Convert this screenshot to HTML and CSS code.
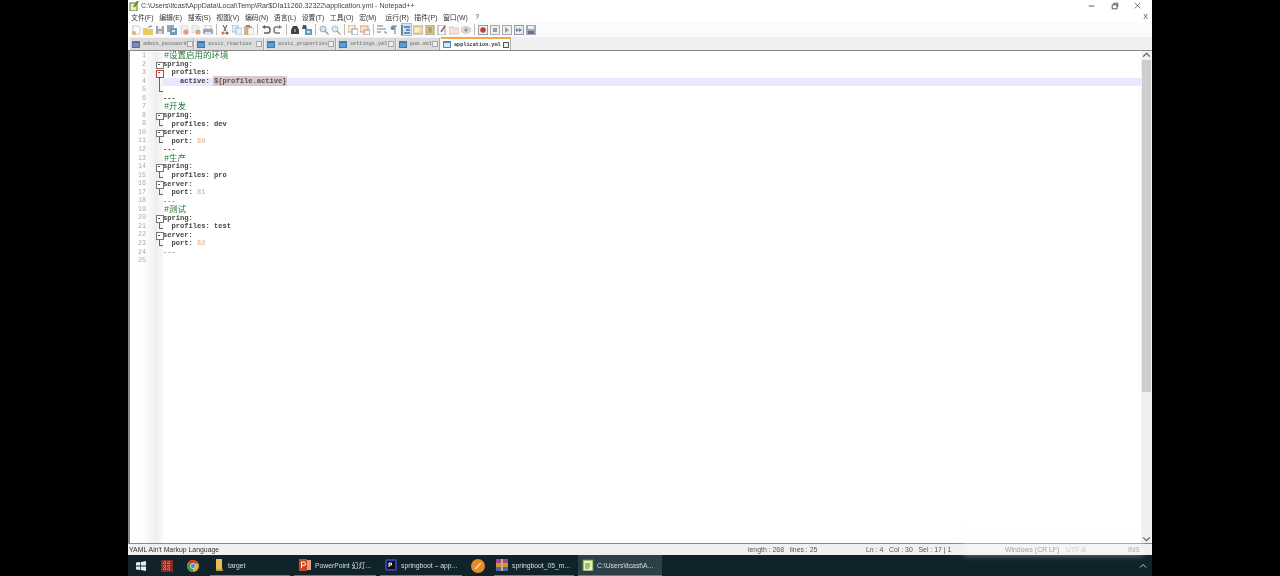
FILE: index.html
```html
<!DOCTYPE html>
<html lang="en">
<head>
  <meta charset="utf-8">
  <title>application.yml - Notepad++</title>
  <link rel="stylesheet" href="styles.css">
</head>
<body>
<div class="window">

  <!-- title bar -->
  <div class="titlebar">
    <svg class="app-icon" viewBox="0 0 10 10"><rect x="1" y="2" width="7" height="8" fill="#e8f0c8" stroke="#5c7a30"/><path d="M5 6 L9 0" stroke="#6a8a20" stroke-width="2"/></svg>
    <span class="title-text">C:\Users\itcast\AppData\Local\Temp\Rar$DIa11260.32322\application.yml - Notepad++</span>
    <div class="win-btns">
      <svg viewBox="0 0 10 10"><path d="M1 5H8" stroke="#333"/></svg>
      <svg viewBox="0 0 10 10"><path d="M1.5 3.5H7.5V8.5H1.5ZM3.5 3V1.5H8.5V6" fill="none" stroke="#333"/></svg>
      <svg viewBox="0 0 10 10"><path d="M1 1L8 8M8 1L1 8" stroke="#333" stroke-width=".8"/></svg>
    </div>
  </div>

  <!-- menu -->
  <div class="menubar">
    <span>文件(F)</span><span>编辑(E)</span><span>搜索(S)</span><span>视图(V)</span><span>编码(N)</span><span>语言(L)</span><span>设置(T)</span><span>工具(O)</span><span class="short">宏(M)</span><span>运行(R)</span><span>插件(P)</span><span>窗口(W)</span><span class="help">?</span>
    <b class="menu-x">X</b>
  </div>

  <!-- toolbar -->
  <div class="toolbar">
    <svg viewBox="0 0 10 10"><path d="M2 1H7L9 3V9H2Z" fill="#fff" stroke="#999" stroke-width=".6"/><circle cx="3" cy="8" r="2" fill="#e8a040"/></svg>
    <svg viewBox="0 0 10 10"><path d="M0 3H4L5 4H10V10H0Z" fill="#eac050"/><path d="M4 3L8 0L9 2Z" fill="#5a8ac0"/></svg>
    <svg viewBox="0 0 10 10"><rect x="1" y="1" width="8" height="8" fill="#8a97a6"/><rect x="3" y="1" width="4" height="3" fill="#eee"/><rect x="3" y="6" width="4" height="3" fill="#ccd"/></svg>
    <svg viewBox="0 0 10 10"><rect x="0" y="0" width="7" height="7" fill="#7f9cb0"/><rect x="3" y="3" width="7" height="7" fill="#5c8aa5"/><rect x="5" y="5" width="3" height="2" fill="#dde"/></svg>
    <svg viewBox="0 0 10 10"><path d="M2 0H7L9 2V9H2Z" fill="#eee" stroke="#bbb" stroke-width=".5"/><circle cx="7" cy="7" r="2.6" fill="#e08a70"/></svg>
    <svg viewBox="0 0 10 10"><path d="M1 0H6L8 2V8H1Z" fill="#eee" stroke="#bbb" stroke-width=".5"/><circle cx="7" cy="7" r="2.6" fill="#d89a60"/></svg>
    <svg viewBox="0 0 10 10"><rect x="2" y="0" width="6" height="4" fill="#fff" stroke="#889" stroke-width=".6"/><rect x="0" y="4" width="10" height="5" fill="#8a9aae"/><rect x="2" y="7" width="6" height="3" fill="#dde"/></svg>
    <i class="sep"></i>
    <svg viewBox="0 0 10 10"><path d="M7 0L4 6M3 0L6 6" stroke="#555" stroke-width="1.1"/><circle cx="3" cy="8" r="1.6" fill="#c86030"/><circle cx="7" cy="8" r="1.6" fill="#555"/></svg>
    <svg viewBox="0 0 10 10"><rect x="0" y="0" width="6" height="7" fill="#d8e6f4" stroke="#7a9cc0" stroke-width=".7"/><rect x="4" y="3" width="6" height="7" fill="#e6f0fa" stroke="#7a9cc0" stroke-width=".7"/></svg>
    <svg viewBox="0 0 10 10"><rect x="0" y="1" width="8" height="9" fill="#c8a868"/><rect x="2" y="0" width="4" height="2" fill="#777"/><rect x="4" y="3" width="6" height="7" fill="#f4f4f4" stroke="#999" stroke-width=".5"/></svg>
    <i class="sep"></i>
    <svg viewBox="0 0 10 10"><path d="M3 2H7Q9 2 9 5T7 8H3" fill="none" stroke="#444" stroke-width="1.5"/><path d="M4 0L1 2L4 4Z" fill="#444"/></svg>
    <svg viewBox="0 0 10 10"><path d="M7 2H3Q1 2 1 5T3 8H7" fill="none" stroke="#666" stroke-width="1.5"/><path d="M6 0L9 2L6 4Z" fill="#666"/></svg>
    <i class="sep"></i>
    <svg viewBox="0 0 10 10"><path d="M3 1H7L9 5V9H1V5Z" fill="#222"/><rect x="4" y="4" width="2" height="3" fill="#777"/></svg>
    <svg viewBox="0 0 10 10"><path d="M1 0H4L5 4H0Z" fill="#334"/><rect x="3" y="4" width="7" height="6" fill="#4a90b8"/><rect x="5" y="6" width="3" height="2" fill="#bde"/></svg>
    <i class="sep"></i>
    <svg viewBox="0 0 10 10"><circle cx="4" cy="4" r="3" fill="#cfe0e8" stroke="#789" stroke-width=".8"/><path d="M6 6L9.5 9.5" stroke="#b08050" stroke-width="1.4"/></svg>
    <svg viewBox="0 0 10 10"><circle cx="4" cy="4" r="3" fill="#dfe4e8" stroke="#99a" stroke-width=".8"/><path d="M6 6L9.5 9.5" stroke="#c09070" stroke-width="1.4"/></svg>
    <i class="sep"></i>
    <svg viewBox="0 0 10 10"><rect x="0" y="0" width="7" height="7" fill="#f8ecd0" stroke="#c8a050"/><rect x="4" y="4" width="6" height="6" fill="#fff" stroke="#88a"/></svg>
    <svg viewBox="0 0 10 10"><rect x="0" y="1" width="8" height="6" fill="#f4e4c0" stroke="#c89860"/><rect x="4" y="5" width="6" height="5" fill="#eef" stroke="#c08070"/></svg>
    <i class="sep"></i>
    <svg viewBox="0 0 10 10"><path d="M0 1H6M0 4H9M0 7H4" stroke="#667" stroke-width="1.1"/><path d="M7 7H9V9" stroke="#48a" fill="none"/></svg>
    <svg viewBox="0 0 10 10"><path d="M3 1H8M6 1V9M4.5 1V5" stroke="#5a7a90" stroke-width="1.2"/><circle cx="3.5" cy="3" r="2" fill="#5a7a90"/></svg>
    <span class="tool-on"><svg viewBox="0 0 10 10"><path d="M1 0V10" stroke="#235" stroke-width="1.2"/><path d="M3 2H9M5 5H9M3 8H9" stroke="#2a60a0" stroke-width="1.3"/></svg></span>
    <svg viewBox="0 0 10 10"><rect x="0" y="1" width="10" height="8" fill="#f0d890" stroke="#998"/><rect x="2" y="3" width="4" height="4" fill="#fff0c0"/></svg>
    <svg viewBox="0 0 10 10"><rect x="1" y="0" width="8" height="10" fill="#d8c070" stroke="#887"/><path d="M3 3H7M3 5H7M3 7H7" stroke="#765"/></svg>
    <svg viewBox="0 0 10 10"><rect x="1" y="0" width="7" height="10" fill="#fff" stroke="#888"/><path d="M8 1L4 7" stroke="#a04030" stroke-width="1.5"/></svg>
    <svg viewBox="0 0 10 10"><path d="M0 2H4L5 3H10V9H0Z" fill="#f4dcd8" stroke="#c8a0a0" stroke-width=".6"/></svg>
    <svg viewBox="0 0 10 10"><ellipse cx="5" cy="5" rx="5" ry="3.4" fill="#d8d8d8" stroke="#999" stroke-width=".5"/><circle cx="5" cy="5" r="1.7" fill="#789"/></svg>
    <i class="sep"></i>
    <svg viewBox="0 0 10 10"><rect x=".5" y=".5" width="9" height="9" fill="#eee" stroke="#889"/><circle cx="5" cy="5" r="2.8" fill="#b02020"/></svg>
    <svg viewBox="0 0 10 10"><rect x=".5" y=".5" width="9" height="9" fill="#eee" stroke="#99a"/><rect x="3" y="3" width="4" height="4" fill="#8a8f98"/></svg>
    <svg viewBox="0 0 10 10"><rect x=".5" y=".5" width="9" height="9" fill="#eee" stroke="#99a"/><path d="M3 2L7 5L3 8Z" fill="#8a8f98"/></svg>
    <svg viewBox="0 0 10 10"><rect x=".5" y=".5" width="9" height="9" fill="#e4e8ee" stroke="#889"/><path d="M2 3L5 5L2 7ZM5 3L8 5L5 7Z" fill="#4a6a90"/></svg>
    <svg viewBox="0 0 10 10"><rect x="0" y="0" width="10" height="10" fill="#8aa0b4"/><rect x="2" y="1" width="6" height="3" fill="#eee"/><rect x="2" y="6" width="6" height="3" fill="#556"/></svg>
  </div>

  <!-- tabs -->
  <div class="tabbar">
    <div class="tab tab-1"><i class="doc"></i><span>admin_password</span><i class="x"></i></div>
    <div class="tab tab-2"><i class="doc"></i><span>assic_reaction</span><i class="x"></i></div>
    <div class="tab tab-3"><i class="doc"></i><span>assic_properties</span><i class="x"></i></div>
    <div class="tab tab-4"><i class="doc"></i><span>settings.yml</span><i class="x"></i></div>
    <div class="tab tab-5"><i class="doc"></i><span>pom.xml</span><i class="x"></i></div>
    <div class="tab active"><i class="doc"></i><span>application.yml</span><i class="x"></i></div>
  </div>

  <!-- editor -->
  <div class="editor">
    <div class="code">
      <div class="row"><i class="no">1</i><i class="fold"></i><span class="txt c">#设置启用的环境</span></div>
      <div class="row"><i class="no">2</i><i class="fold box"></i><span class="txt">spring:</span></div>
      <div class="row"><i class="no">3</i><i class="fold box red"></i><span class="txt">  profiles:</span></div>
      <div class="row cur"><i class="no">4</i><i class="fold line red"></i><span class="txt">    active: <em>${profile.active}</em></span></div>
      <div class="row"><i class="no">5</i><i class="fold end"></i><span class="txt"></span></div>
      <div class="row"><i class="no">6</i><i class="fold"></i><span class="txt">---</span></div>
      <div class="row"><i class="no">7</i><i class="fold"></i><span class="txt c">#开发</span></div>
      <div class="row"><i class="no">8</i><i class="fold box"></i><span class="txt">spring:</span></div>
      <div class="row"><i class="no">9</i><i class="fold end"></i><span class="txt">  profiles: dev</span></div>
      <div class="row"><i class="no">10</i><i class="fold box"></i><span class="txt">server:</span></div>
      <div class="row"><i class="no">11</i><i class="fold end"></i><span class="txt">  port: <u>80</u></span></div>
      <div class="row"><i class="no">12</i><i class="fold"></i><span class="txt">---</span></div>
      <div class="row"><i class="no">13</i><i class="fold"></i><span class="txt c">#生产</span></div>
      <div class="row"><i class="no">14</i><i class="fold box"></i><span class="txt">spring:</span></div>
      <div class="row"><i class="no">15</i><i class="fold end"></i><span class="txt">  profiles: pro</span></div>
      <div class="row"><i class="no">16</i><i class="fold box"></i><span class="txt">server:</span></div>
      <div class="row"><i class="no">17</i><i class="fold end"></i><span class="txt">  port: <u>81</u></span></div>
      <div class="row"><i class="no">18</i><i class="fold"></i><span class="txt dim">---</span></div>
      <div class="row"><i class="no">19</i><i class="fold"></i><span class="txt c">#测试</span></div>
      <div class="row"><i class="no">20</i><i class="fold box"></i><span class="txt">spring:</span></div>
      <div class="row"><i class="no">21</i><i class="fold end"></i><span class="txt">  profiles: test</span></div>
      <div class="row"><i class="no">22</i><i class="fold box"></i><span class="txt">server:</span></div>
      <div class="row"><i class="no">23</i><i class="fold end"></i><span class="txt">  port: <u>82</u></span></div>
      <div class="row"><i class="no">24</i><i class="fold"></i><span class="txt dim">---</span></div>
      <div class="row"><i class="no">25</i><i class="fold"></i><span class="txt"></span></div>
      <div class="gutter-rest"><i class="no"></i><i class="fold"></i></div>
    </div>
    <div class="scroll">
      <svg class="arrow" viewBox="0 0 8 8"><path d="M1 5L4 2L7 5" fill="none" stroke="#555"/></svg>
      <div class="thumb"></div>
      <div class="track"></div>
      <svg class="arrow" viewBox="0 0 8 8"><path d="M1 3L4 6L7 3" fill="none" stroke="#555"/></svg>
    </div>
  </div>

  <!-- status bar -->
  <div class="status">
    <span class="st-lang">YAML Ain't Markup Language</span>
    <span class="st-len">length : 268 &nbsp; lines : 25</span>
    <span class="st-pos">Ln : 4 &nbsp; Col : 30 &nbsp; Sel : 17 | 1</span>
    <span class="st-eol">Windows (CR LF)</span>
    <span class="st-enc">UTF-8</span>
    <span class="st-ins">INS</span>
  </div>

  <!-- taskbar -->
  <div class="taskbar">
    <svg class="start" viewBox="0 0 10 10"><path d="M0 1.5L4.3 1V4.6H0ZM5 .9L10 0V4.6H5ZM0 5.4H4.3V9L0 8.5ZM5 5.4H10V10L5 9.1Z" fill="#e8eef0"/></svg>
    <span class="task-icon">
      <svg viewBox="0 0 12 12"><rect width="12" height="12" rx="1" fill="#8c2a26"/><path d="M2 3H10M2 6H10M2 9H10M4 1V11M8 1V11" stroke="#d8a8a0" stroke-dasharray="1 1"/></svg>
    </span>
    <span class="task-icon">
      <svg viewBox="0 0 12 12"><circle cx="6" cy="6" r="6" fill="#d8b030"/><path d="M6 6L1 2.5A6 6 0 0 1 11.5 3.5H6Z" fill="#cc4030"/><path d="M6 6L.8 3A6 6 0 0 0 6 12Z" fill="#3f9a4a"/><circle cx="6" cy="6" r="2.6" fill="#4a88d8" stroke="#eee" stroke-width=".7"/></svg>
    </span>
    <div class="task t-target">
      <svg viewBox="0 0 12 12"><path d="M3 0H9V12H3Z" fill="#e8c050"/><path d="M3 10H10V12H3Z" fill="#c89830"/></svg>
      <span>target</span>
    </div>
    <div class="task t-ppt">
      <svg viewBox="0 0 12 12"><rect x="3" y="1" width="9" height="10" fill="#e8a080"/><rect y="0" width="8" height="12" fill="#c84a28"/><path d="M2.5 9V3H5Q6.5 3 6.5 4.7T5 6.4H2.5" fill="none" stroke="#fff"/></svg>
      <span>PowerPoint 幻灯...</span>
    </div>
    <div class="task t-idea">
      <svg viewBox="0 0 12 12"><rect width="12" height="12" rx="2" fill="#3040a0"/><rect x="2" y="2" width="8" height="8" fill="#111"/><path d="M4 8V4H6.5V6H4" fill="none" stroke="#fff"/></svg>
      <span>springboot – app...</span>
    </div>
    <span class="task-icon orange">
      <svg viewBox="0 0 12 12"><circle cx="6" cy="6" r="6" fill="#e88a28"/><path d="M3.5 8.5L8.5 3.5" stroke="#f8e0b0" stroke-width="1.2"/></svg>
    </span>
    <div class="task t-rar">
      <svg viewBox="0 0 12 12"><rect width="12" height="4" fill="#a04890"/><rect y="4" width="12" height="4" fill="#d89030"/><rect y="8" width="12" height="4" fill="#4070a8"/><rect x="5" width="2" height="12" fill="#c8b070"/></svg>
      <span>springboot_05_m...</span>
    </div>
    <div class="task t-npp">
      <svg viewBox="0 0 12 12"><rect x="1" y="1" width="10" height="11" fill="#e8f0c0" stroke="#5a8a30"/><path d="M3 5H8M3 7H8M3 9H7" stroke="#5a8a30"/></svg>
      <span>C:\Users\itcast\A...</span>
    </div>
    <svg class="tray" viewBox="0 0 8 8"><path d="M1 5.5L4 2.5L7 5.5" fill="none" stroke="#b8c4c8"/></svg>
  </div>

  <div class="watermark"></div>
</div>
</body>
</html>
```

FILE: styles.css
```css
* {
    margin: 0;
    padding: 0;
    box-sizing: border-box;
}
html, body {
    height: 100%;
    background: #000;
    overflow: hidden;
}
i, em, u {
    font-style: normal;
    text-decoration: none;
}

.window {
    position: relative;
    width: 1024px;
    height: 576px;
    margin: 0 auto;
    background: #fff;
    display: flex;
    flex-direction: column;
    font-family: "Liberation Sans", "Noto Sans CJK SC", sans-serif;
    font-size: 7px;
    color: #333;
    filter: blur(.45px);
}

/* title bar */
.titlebar {
    height: 11px;
    display: flex;
    align-items: center;
    background: #fff;
}
.app-icon {
    width: 10px;
    height: 10px;
    margin: 0 2px 0 1px;
}
.title-text {
    font-size: 7.1px;
    color: #444;
}
.win-btns {
    margin-left: auto;
    display: flex;
    gap: 15px;
    margin-right: 10px;
}
.win-btns svg {
    width: 8px;
    height: 8px;
}

/* menu */
.menubar {
    height: 11px;
    display: flex;
    align-items: center;
    padding-left: 3px;
    gap: 5.6px;
    font-size: 6.9px;
    color: #333;
    background: #fff;
}
.menubar .short {
    margin-right: 3.4px;
}
.menubar .help {
    margin-left: 2px;
}
.menu-x {
    margin-left: auto;
    margin-right: 4px;
    font-weight: normal;
    font-size: 7px;
    color: #444;
}

/* toolbar */
.toolbar {
    height: 15px;
    display: flex;
    align-items: center;
    padding-left: 3px;
    gap: 2px;
    background: #fbfbfb;
}
.toolbar svg {
    width: 10px;
    height: 10px;
    flex: none;
    opacity: .85;
}
.sep {
    width: 1px;
    height: 11px;
    margin: 0 1px;
    background: #bbb;
}
.tool-on {
    width: 11px;
    height: 13px;
    margin: 0 -.5px;
    display: flex;
    align-items: center;
    justify-content: center;
    background: #cfe3f5;
    border: 1px solid #9cc0e0;
}

/* tabs */
.tabbar {
    height: 13px;
    display: flex;
    align-items: flex-end;
    padding-left: 2px;
    gap: 1px;
    background: #f0f0f0;
}
.tab {
    height: 12px;
    display: flex;
    align-items: center;
    padding: 0 1px 0 2px;
    background: #dcdcdc;
    border-right: 1px solid #aaa;
    font-family: "Liberation Mono", monospace;
    font-size: 5.2px;
    font-weight: bold;
    color: #888;
}
.tab-1 { width: 64px; }
.tab-2 { width: 69px; }
.tab-3 { width: 71px; }
.tab-4 { width: 59px; }
.tab-5 { width: 43px; }
.tab.active {
    width: 70px;
    height: 13px;
    background: #fff;
    color: #333;
    border-top: 2px solid #f0a848;
}
.tab span {
    flex: 1;
    padding-left: 3px;
    white-space: nowrap;
}
.doc {
    width: 8px;
    height: 7px;
    flex: none;
    background: #5f9cd0;
    border: 1px solid #3f7ab0;
    border-top-width: 2px;
}
.tab:first-child .doc {
    background: #8088b8;
    border-color: #6068a0;
}
.tab.active .doc {
    background: #d8e8f4;
    border-color: #4a88c0;
}
.x {
    width: 6px;
    height: 6px;
    flex: none;
    border: 1px solid #aaa;
    background: #eee;
}
.tab.active .x {
    border-color: #555;
}

/* editor */
.editor {
    flex: 1;
    min-height: 0;
    display: flex;
    border-top: 1px solid #8a8a8a;
    border-bottom: 1px solid #8a8a8a;
    border-left: 2px solid #8a8a8a;
}
.code {
    flex: 1;
    display: flex;
    flex-direction: column;
    margin-top: 1px;
}
.row {
    height: 8.55px;
    flex: none;
    display: flex;
    align-items: center;
}
.gutter-rest {
    flex: 1;
    display: flex;
}
.no {
    width: 25px;
    height: 100%;
    flex: none;
    padding-right: 9px;
    text-align: right;
    line-height: 8.55px;
    font-family: "Liberation Mono", monospace;
    font-size: 6.6px;
    color: #aaa;
    background: linear-gradient(to right, #fff 50%, #f1f1f1);
}
.fold {
    position: relative;
    width: 8px;
    height: 100%;
    flex: none;
    background: linear-gradient(to right, #ededed, #f8f8f8);
}
.fold.box::before {
    content: "";
    position: absolute;
    left: 1px;
    top: 1px;
    width: 5.5px;
    height: 5.5px;
    border: 1px solid #777;
    background: #fff;
}
.fold.box::after {
    content: "";
    position: absolute;
    left: 2.5px;
    top: 3.3px;
    width: 2.5px;
    height: 1px;
    background: #555;
}
.fold.box.red::before {
    border-color: #c04040;
}
.fold.box.red::after {
    background: #c04040;
}
.fold.line::before {
    content: "";
    position: absolute;
    left: 3.5px;
    top: 0;
    width: 1px;
    height: 100%;
    background: #c04040;
}
.fold.end::before {
    content: "";
    position: absolute;
    left: 3.5px;
    top: 0;
    width: 3px;
    height: 5px;
    border-left: 1px solid #666;
    border-bottom: 1px solid #666;
}
.txt {
    padding-bottom: 1.4px;
    white-space: pre;
    font-family: "Liberation Mono", "Noto Sans CJK SC", monospace;
    font-size: 7.1px;
    font-weight: bold;
    color: #444;
    line-height: 8.55px;
}
.txt.c {
    padding-left: 1px;
    padding-bottom: 0;
    font-size: 8.5px;
    font-weight: normal;
    color: #1f7a35;
}
.txt.dim {
    color: #999;
}
.txt em {
    background: #dcc8c8;
    color: #555;
    outline: 1px solid #dcc8c8;
}
.txt u {
    color: #e8c0a0;
}
.row.cur {
    background: #e8e8ff;
}
.row.cur .txt {
    flex: 1;
}

/* scrollbar */
.scroll {
    width: 11px;
    flex: none;
    display: flex;
    flex-direction: column;
    background: #f0f0f0;
    padding-left: 1px;
}
.arrow {
    width: 9px;
    height: 9px;
    flex: none;
}
.thumb {
    height: 332px;
    flex: none;
    margin: 0 1px 0 0;
    background: #cdcdcd;
}
.track {
    flex: 1;
}

/* status bar */
.status {
    height: 11px;
    display: flex;
    align-items: center;
    background: #f0f0f0;
    font-size: 6.9px;
    color: #555;
    white-space: nowrap;
}
.st-lang { width: 620px; padding-left: 1px; color: #333; }
.st-len { width: 118px; }
.st-pos { width: 139px; }
.st-eol { width: 61px; color: #666; }
.st-enc { width: 62px; color: #aaa; }
.st-ins { color: #777; }

/* taskbar */
.taskbar {
    height: 21px;
    display: flex;
    align-items: center;
    background: #10232b;
    color: #d8dfe2;
    font-size: 6.8px;
    white-space: nowrap;
}
.start {
    width: 10px;
    height: 10px;
    margin: 0 15px 0 8px;
    flex: none;
}
.task-icon {
    width: 12px;
    height: 12px;
    margin-right: 14px;
    flex: none;
}
.task-icon svg, .task svg {
    display: block;
    width: 12px;
    height: 12px;
    flex: none;
}
.task-icon + .task-icon {
    margin-right: 11px;
}
.task {
    height: 100%;
    display: flex;
    align-items: center;
    gap: 4px;
    padding-left: 5px;
    border-bottom: 1px solid #5d8494;
}
.t-target { width: 80px; margin-right: 4px; padding-left: 3px; gap: 3px; }
.t-ppt { width: 82px; margin-right: 4px; }
.t-idea { width: 82px; margin-right: 9px; }
.task-icon.orange { width: 14px; height: 14px; margin: 0 9px 0 0; }
.task-icon.orange svg { width: 14px; height: 14px; }
.t-rar { width: 80px; margin-right: 4px; padding-left: 2px; gap: 4px; }
.t-npp { width: 84px; padding-left: 4px; gap: 3px; background: #2d4048; }
.tray {
    width: 8px;
    height: 8px;
    margin-left: auto;
    margin-right: 5px;
}

/* faint watermark over the status area */
.watermark {
    position: absolute;
    left: 835px;
    top: 528px;
    width: 180px;
    height: 27px;
    background: linear-gradient(to bottom, rgba(255,255,255,0), rgba(255,255,255,.5));
    filter: blur(3px);
    pointer-events: none;
}
```
